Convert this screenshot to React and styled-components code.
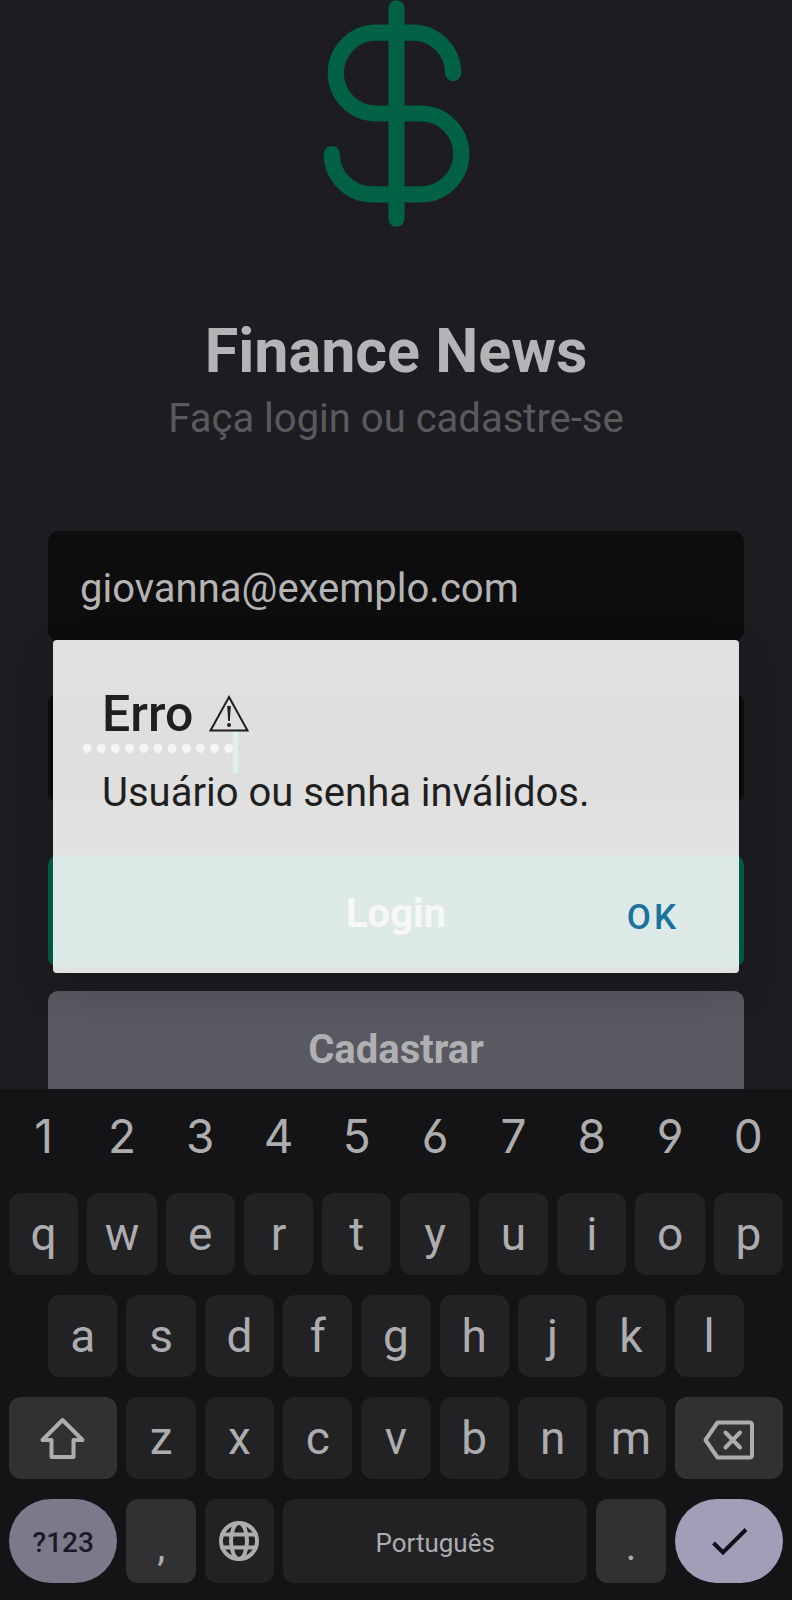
import React from "react";
import styled, { createGlobalStyle } from "styled-components";

const GlobalStyle = createGlobalStyle`
  *, *::before, *::after { box-sizing: border-box; }
  body { margin: 0; background: #1d1d21; font-family: Roboto, sans-serif; }
  button, input { font: inherit; border: 0; margin: 0; padding: 0; outline: none; }
`;

const Screen = styled.div`
  position: relative;
  display: flex;
  flex-direction: column;
  height: 100vh;
  overflow: hidden;
  background: #1d1d21;
`;

const Page = styled.main`
  flex: 1;
  min-height: 0;
  overflow: hidden;
  display: flex;
  flex-direction: column;
  align-items: center;
  padding: 0 48px;
`;

const Logo = styled.svg`
  flex: none;
  display: block;
  width: 259px;
  height: 227px;
  margin-bottom: 88px;
  fill: none;
  stroke: #006144;
  stroke-width: 16;
  stroke-linecap: round;
  stroke-linejoin: round;
`;

const Title = styled.h1`
  margin: 0 0 8px;
  font-size: 61px;
  line-height: 72px;
  font-weight: 700;
  color: #b4b4b7;
`;

const Subtitle = styled.p`
  margin: 0 0 88px;
  font-size: 40px;
  line-height: 48px;
  color: #59595e;
`;

const Form = styled.form`
  display: flex;
  flex-direction: column;
  width: 100%;
`;

const Field = styled.label`
  position: relative;
  display: block;
  margin-bottom: 52px;
`;

const Input = styled.input`
  display: block;
  width: 100%;
  height: 110px;
  padding: 4px 32px 0;
  border-radius: 10px;
  background: #0d0d0d;
  color: #b4b4b4;
  font-size: 40px;
  line-height: 48px;
`;

const PasswordInput = styled(Input)`
  padding: 2px 32px 0;
  font-size: 42px;
`;

const Caret = styled.span`
  position: absolute;
  top: 38px;
  left: 185px;
  width: 5px;
  height: 42px;
  background: #009070;
`;

const FormButton = styled.button`
  height: 112px;
  margin-bottom: 24px;
  padding-top: 6px;
  border-radius: 10px;
  background: ${(p) => (p.$primary ? "#006144" : "#595961")};
  color: ${(p) => (p.$primary ? "#c0c0c0" : "#b0b0b3")};
  font-size: 40px;
  line-height: 48px;
  font-weight: 700;
`;

const Overlay = styled.div`
  position: absolute;
  inset: 0;
  display: flex;
  align-items: center;
  padding: 12px 53px 0;
`;

const Dialog = styled.section`
  flex: 1;
  padding: 44px 0 19px;
  border-radius: 4px;
  background: rgba(255, 255, 255, 0.87);
  box-shadow: 0 16px 40px rgba(0, 0, 0, 0.18);
  color: #1f1f1f;
`;

const DialogTitle = styled.h2`
  display: flex;
  align-items: center;
  gap: 15px;
  margin: 0;
  padding: 0 49px;
  font-size: 50px;
  line-height: 60px;
  font-weight: 500;
`;

const WarningIcon = styled.svg`
  width: 42px;
  height: 40px;
  fill: none;
  stroke: currentColor;
  stroke-width: 2;
`;

const DialogText = styled.p`
  margin: 25px 0 65px;
  padding: 0 49px;
  font-size: 40px;
  line-height: 48px;
`;

const DialogActions = styled.div`
  display: flex;
  justify-content: flex-end;
  padding-right: 28px;
`;

const DialogButton = styled.button`
  padding: 16px 32px;
  background: none;
  color: #1b729f;
  font-size: 35px;
  line-height: 40px;
  font-weight: 500;
  letter-spacing: 3px;
`;

const Keyboard = styled.div`
  flex: none;
  display: flex;
  flex-direction: column;
  gap: 20px;
  padding: 6px 9px 17px;
  background: #141416;
`;

const KeyRow = styled.div`
  display: grid;
  grid-template-columns: repeat(20, minmax(0, 1fr));
  column-gap: 9px;
  height: ${(p) => p.$height || 82}px;
`;

const keyTones = {
  plain: "transparent",
  letter: "#222224",
  special: "#313133",
  mode: "#7b798a",
  enter: "#a09fb7",
};

const Key = styled.button`
  grid-column: ${(p) => (p.$start ? p.$start + " / " : "")} span ${(p) => p.$span || 2};
  display: flex;
  align-items: center;
  justify-content: center;
  min-width: 0;
  border-radius: ${(p) => (p.$round ? 42 : 12)}px;
  background: ${(p) => keyTones[p.$tone || "letter"]};
  color: #adadaf;
  font-size: 46px;
  line-height: 54px;
`;

const DigitKey = styled(Key)`
  padding-top: 4px;
  font-family: Inter, sans-serif;
  font-feature-settings: "cv03", "cv04";
`;

const PunctuationKey = styled(Key)`
  padding-top: 12px;
  font-size: 40px;
`;

const ModeKey = styled(Key)`
  padding-top: 4px;
  color: #1b1a2b;
  font-size: 28px;
  font-weight: 500;
`;

const SpaceKey = styled(Key)`
  padding-top: 4px;
  font-size: 26px;
`;

const KeyIcon = styled.svg`
  display: block;
  flex: none;
  fill: none;
  stroke: ${(p) => p.$color || "#adadaf"};
  stroke-width: ${(p) => p.$stroke || 5};
  stroke-linejoin: ${(p) => (p.$sharp ? "miter" : "round")};
  stroke-linecap: ${(p) => (p.$sharp ? "butt" : "round")};
`;

function Letters({ text, start }) {
  return text.split("").map((letter, i) => (
    <Key key={letter} type="button" $start={i === 0 ? start : undefined}>
      {letter}
    </Key>
  ));
}

export default function App() {
  return (
    <Screen>
      <GlobalStyle />
      <Page>
        <Logo viewBox="0 16 256 224" aria-hidden="true">
          <path d="M128 24V232M184 88a40 40 0 0 0-40-40H108a40 40 0 0 0 0 80H152a40 40 0 0 1 0 80H104a40 40 0 0 1-40-40" />
        </Logo>
        <Title>Finance News</Title>
        <Subtitle>Faça login ou cadastre-se</Subtitle>
        <Form onSubmit={(e) => e.preventDefault()}>
          <Field>
            <Input type="email" aria-label="E-mail" defaultValue="giovanna@exemplo.com" />
          </Field>
          <Field>
            <PasswordInput type="password" aria-label="Senha" defaultValue="12345678910" />
            <Caret />
          </Field>
          <FormButton type="submit" $primary>Login</FormButton>
          <FormButton type="button">Cadastrar</FormButton>
        </Form>
      </Page>

      <Keyboard>
        <KeyRow $height={78}>
          {"1234567890".split("").map((digit) => (
            <DigitKey key={digit} type="button" $tone="plain">{digit}</DigitKey>
          ))}
        </KeyRow>
        <KeyRow>
          <Letters text="qwertyuiop" />
        </KeyRow>
        <KeyRow>
          <Letters text="asdfghjkl" start={2} />
        </KeyRow>
        <KeyRow>
          <Key type="button" aria-label="Shift" $span={3} $tone="special">
            <KeyIcon width="48" height="44" viewBox="0 0 48 44" $stroke={4}>
              <path d="M23.5 4L43.5 24H34.5V41H12.5V24H3.5Z" />
            </KeyIcon>
          </Key>
          <Letters text="zxcvbnm" />
          <Key type="button" aria-label="Apagar" $span={3} $tone="special">
            <KeyIcon width="52" height="48" viewBox="0 0 52 48" $stroke={4}>
              <path d="M2.5 26L14.500 8.5H46.500Q49 8.5 49 11V41Q49 43.500 46.500 43.500H14.500ZM22.500 18.500L37 33.500M37 18.500L22.500 33.500" />
            </KeyIcon>
          </Key>
        </KeyRow>
        <KeyRow $height={84}>
          <ModeKey type="button" $span={3} $tone="mode" $round>?123</ModeKey>
          <PunctuationKey type="button" $tone="special">,</PunctuationKey>
          <Key type="button" aria-label="Idioma">
            <KeyIcon width="44" height="44" viewBox="0 0 44 44" $stroke={4}>
              <circle cx="22" cy="22" r="18" />
              <ellipse cx="22" cy="22" rx="8" ry="18" />
              <path d="M5 15.500H39M5 28.500H39" />
            </KeyIcon>
          </Key>
          <SpaceKey type="button" $span={8}>Português</SpaceKey>
          <PunctuationKey type="button" $tone="special">.</PunctuationKey>
          <Key type="button" aria-label="Concluir" $span={3} $tone="enter" $round>
            <KeyIcon width="40" height="40" viewBox="0 0 40 40" $color="#10101c" $stroke={4} $sharp>
              <path d="M4.500 22L14 31.500L37 8.500" />
            </KeyIcon>
          </Key>
        </KeyRow>
      </Keyboard>

      <Overlay>
        <Dialog role="alertdialog" aria-labelledby="dialog-title" aria-describedby="dialog-text">
          <DialogTitle id="dialog-title">
            Erro
            <WarningIcon viewBox="0 0 42 40" role="img" aria-label="Atenção">
              <path d="M21 3L39.500 36.500H2.500Z" />
              <path d="M19.200 12H22.800L21.800 27H20.200Z" fill="currentColor" stroke="none" />
              <circle cx="21" cy="31" r="2" fill="currentColor" stroke="none" />
            </WarningIcon>
          </DialogTitle>
          <DialogText id="dialog-text">Usuário ou senha inválidos.</DialogText>
          <DialogActions>
            <DialogButton type="button">OK</DialogButton>
          </DialogActions>
        </Dialog>
      </Overlay>
    </Screen>
  );
}
